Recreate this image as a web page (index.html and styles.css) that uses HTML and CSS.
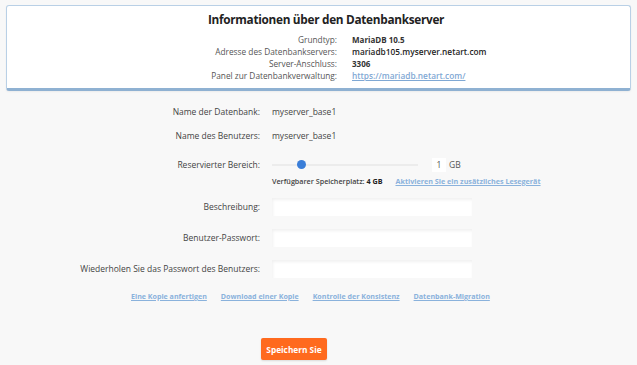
FILE: index.html
```html
<!DOCTYPE html>
<html lang="de">
<head>
<meta charset="utf-8">
<title>Datenbank</title>
<link rel="stylesheet" href="styles.css">
</head>
<body>
<section class="card">
  <h1 class="card-title">Informationen über den Datenbankserver</h1>
  <dl class="info">
    <dt>Grundtyp:</dt><dd class="strong bold">MariaDB 10.5</dd>
    <dt>Adresse des Datenbankservers:</dt><dd class="strong">mariadb105.myserver.netart.com</dd>
    <dt>Server-Anschluss:</dt><dd class="strong bold">3306</dd>
    <dt>Panel zur Datenbankverwaltung:</dt><dd><a class="info-link" href="#">https://mariadb.netart.com/</a></dd>
  </dl>
</section>

<form class="form">
  <div class="row row-name">
    <span class="label">Name der Datenbank:</span>
    <span class="value">myserver_base1</span>
  </div>
  <div class="row row-user">
    <span class="label">Name des Benutzers:</span>
    <span class="value">myserver_base1</span>
  </div>
  <div class="row row-slider">
    <span class="label">Reservierter Bereich:</span>
    <div class="slider-line">
      <div class="track"><span class="thumb"></span></div>
      <span class="num">1</span>
      <span class="unit">GB</span>
    </div>
  </div>
  <div class="row row-sub">
    <span></span>
    <div class="sub">
      <span>Verfügbarer Speicherplatz: <b>4 GB</b></span>
      <a class="link" href="#">Aktivieren Sie ein zusätzliches Lesegerät</a>
    </div>
  </div>
  <div class="row row-input first">
    <label class="label">Beschreibung:</label>
    <input class="field" type="text">
  </div>
  <div class="row row-input">
    <label class="label">Benutzer-Passwort:</label>
    <input class="field" type="password">
  </div>
  <div class="row row-input">
    <label class="label">Wiederholen Sie das Passwort des Benutzers:</label>
    <input class="field" type="password">
  </div>
  <nav class="actions">
    <a class="link" href="#">Eine Kopie anfertigen</a>
    <a class="link" href="#">Download einer Kopie</a>
    <a class="link" href="#">Kontrolle der Konsistenz</a>
    <a class="link" href="#">Datenbank-Migration</a>
  </nav>
  <div class="submit-row">
    <button class="btn" type="button">Speichern Sie</button>
  </div>
</form>
</body>
</html>
```

FILE: styles.css
```css
html, body {
  margin: 0;
  padding: 0;
}
body {
  background: #f8f8f8;
  font-family: "Open Sans", "Noto Sans", sans-serif;
  color: #3a3a3a;
  width: 637px;
  height: 365px;
  overflow: hidden;
}
.card {
  margin: 5px 6px 0 6px;
  background: #fff;
  border: 1px solid #b9d0e6;
  border-bottom: 3px solid #8fb1d2;
  border-radius: 3px;
  padding: 5px 0 6px 0;
  box-shadow: 0 1px 2px rgba(0,0,0,0.05);
}
.card-title {
  margin: 0;
  padding-left: 15px;
  text-align: center;
  font-size: 11.8px;
  letter-spacing: -0.3px;
  line-height: 17px;
  font-weight: 700;
  color: #222;
}
.info {
  margin: 6px 0 0 0;
  display: grid;
  grid-template-columns: 330px 1fr;
  column-gap: 15px;
  font-size: 8.3px;
  line-height: 12px;
}
.info dt {
  text-align: right;
  color: #555;
}
.info dd {
  margin: 0;
  color: #1e1e1e;
}
.info dd.strong {
  font-weight: 600;
}
.info dd.bold {
  font-size: 8px;
  font-weight: 700;
  color: #333;
}
.info-link {
  color: #7fa8d4;
  font-weight: 600;
  text-decoration: underline;
}
.form {
  display: flex;
  flex-direction: column;
  font-size: 8.5px;
}
.row {
  display: grid;
  grid-template-columns: 260px 200px;
  column-gap: 12px;
  align-items: center;
  line-height: 14px;
}
.label {
  text-align: right;
  color: #444;
}
.value {
  color: #444;
}
.row-name { margin-top: 14px; }
.row-user { margin-top: 10px; }
.row-slider { margin-top: 15px; }
.slider-line {
  display: flex;
  align-items: center;
  width: 260px;
}
.track {
  position: relative;
  width: 146px;
  height: 2px;
  background: #ececec;
}
.thumb {
  position: absolute;
  left: 25px;
  top: -4px;
  width: 9px;
  height: 9px;
  border-radius: 50%;
  background: #3a7ed8;
}
.num {
  margin-left: 14px;
  width: 14px;
  text-align: center;
  background: #fff;
  color: #555;
}
.unit {
  margin-left: 3px;
  color: #555;
}
.row-sub {
  margin-top: 3px;
  line-height: 12px;
}
.sub {
  display: flex;
  gap: 13px;
  font-size: 7.2px;
  white-space: nowrap;
  color: #444;
  font-weight: 600;
}
.sub b { font-weight: 700; color: #222; }
.link {
  color: #8ab2dc;
  font-weight: 700;
  text-decoration: underline;
}
.row-input.first { margin-top: 11px; }
.row-input { margin-top: 14px; }
.row-input + .row-input { margin-top: 13px; }
.field {
  box-sizing: border-box;
  width: 200px;
  height: 18px;
  border: 0;
  background: #fff;
  box-shadow: inset 1px 2px 3px rgba(0,0,0,0.06);
  outline: none;
  margin: 0;
}
.actions {
  display: flex;
  gap: 14px;
  margin: 12px 0 0 131px;
  font-size: 7.1px;
  line-height: 12px;
}
.submit-row {
  margin: 36px 0 0 261px;
}
.btn {
  width: 66px;
  height: 22px;
  border: 0;
  border-radius: 2px;
  background: #ff6a1e;
  color: #fff;
  font-family: inherit;
  font-weight: 700;
  font-size: 8.3px;
  padding: 0;
  box-shadow: 0 1px 2px rgba(0,0,0,0.12);
}
```
